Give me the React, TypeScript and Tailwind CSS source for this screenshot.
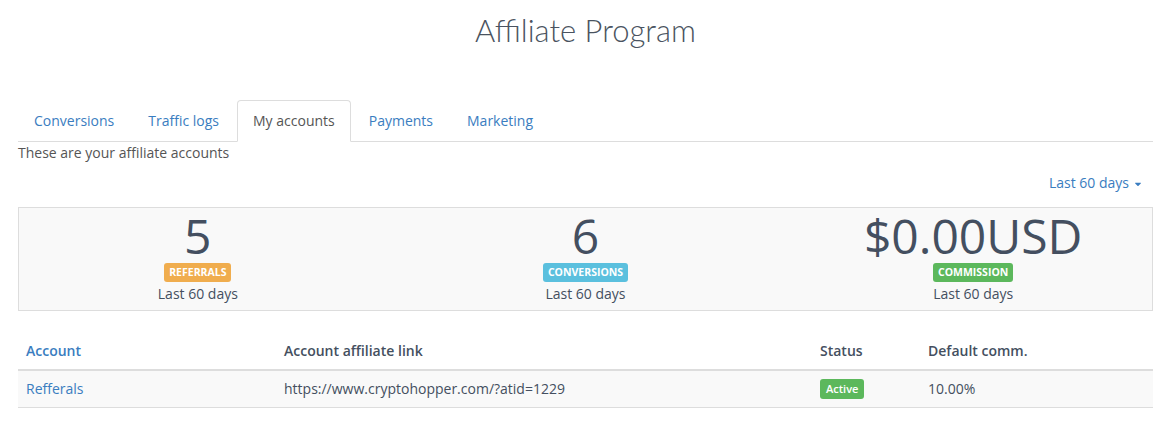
import { FaCaretDown } from "react-icons/fa";

const tabs = ["Conversions", "Traffic logs", "My accounts", "Payments", "Marketing"];

const stats = [
  { value: "5", label: "Referrals", color: "bg-[#f0ad4e]" },
  { value: "6", label: "Conversions", color: "bg-[#5bc0de]" },
  { value: "$0.00USD", label: "Commission", color: "bg-[#5cb85c]" },
];

export default function App() {
  return (
    <div className="bg-white min-h-[440px] px-[18px] text-[14px] text-[#555] font-['Open_Sans',sans-serif]">
      <h1 className="pt-[7px] h-[100px] text-center text-[31px] font-light text-[#4a5360] font-['Lato',sans-serif]">
        Affiliate Program
      </h1>

      <ul className="flex border-b border-[#ddd] h-[42px]">
        {tabs.map((tab) => (
          <li
            key={tab}
            className={`-mb-px mr-[2px] px-[15px] pb-[2px] h-[42px] flex items-center rounded-t-[4px] border ${
              tab === "My accounts"
                ? "border-[#ddd] border-b-white bg-white text-[#555]"
                : "border-transparent text-[#3a7dc0]"
            }`}
          >
            {tab}
          </li>
        ))}
      </ul>

      <p className="mt-[1px] leading-[20px]">These are your affiliate accounts</p>

      <div className="flex justify-end pr-[10px] mt-[10px] h-[20px] leading-[20px] text-[#3a7dc0]">
        Last 60 days
        <FaCaretDown className="ml-[4px] mt-[6px] text-[10px]" />
      </div>

      <div className="mt-[14px] h-[104px] border border-[#ddd] bg-[#f9f9f9]">
        <div className="-mx-[15px] grid grid-cols-3">
          {stats.map((s) => (
            <div key={s.label} className="flex flex-col items-center pt-[5px]">
              <div className="mb-[4px] text-[48px] leading-[46px] text-[#444f60]">{s.value}</div>
              <span
                className={`${s.color} rounded-[3px] px-[5px] h-[19px] leading-[19px] text-[10.5px] font-bold uppercase text-white`}
              >
                {s.label}
              </span>
              <div className="mt-[1px] leading-[22px] text-[#444f60]">Last 60 days</div>
            </div>
          ))}
        </div>
      </div>

      <table className="mt-[22px] w-full border-collapse text-[#444f60]">
        <thead>
          <tr className="border-b-2 border-[#ddd] text-left leading-[20px]">
            <th className="w-[258px] px-[8px] py-[8px] font-semibold text-[#3a7dc0]">Account</th>
            <th className="w-[536px] px-[8px] py-[8px] font-semibold">Account affiliate link</th>
            <th className="w-[108px] px-[8px] py-[8px] font-semibold">Status</th>
            <th className="px-[8px] py-[8px] font-semibold">Default comm.</th>
          </tr>
        </thead>
        <tbody>
          <tr className="border-b border-[#ddd] bg-[#f9f9f9] leading-[20px]">
            <td className="px-[8px] py-[8px] text-[#3a7dc0]">Refferals</td>
            <td className="px-[8px] py-[8px]">https://www.cryptohopper.com/?atid=1229</td>
            <td className="px-[8px] py-[8px]">
              <span className="inline-block align-top rounded-[3px] bg-[#5cb85c] px-[6px] h-[20px] leading-[20px] text-[11px] font-semibold text-white">
                Active
              </span>
            </td>
            <td className="px-[8px] py-[8px]">10.00%</td>
          </tr>
        </tbody>
      </table>
    </div>
  );
}
